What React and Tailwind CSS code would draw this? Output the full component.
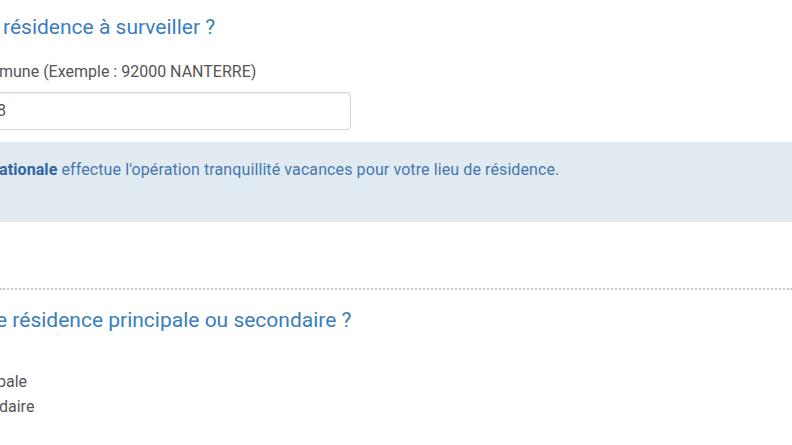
export default function App() {
    return (
        <div className="w-[792px] h-[445px] overflow-hidden bg-white font-['Roboto',sans-serif]">
            {/* Résidence à surveiller */}
            <h2 className="flex pt-[14px] text-[21px] leading-[26px] text-[#3b7dbd] whitespace-nowrap">
                <span className="-ml-[300px] w-[294px] shrink-0 text-right">Quelle est l'adresse de la</span>
                <span className="ml-[9px]">résidence à surveiller ?</span>
            </h2>

            <label className="flex mt-[21px] text-[16px] leading-[22px] text-[#555] whitespace-nowrap">
                <span className="-ml-[300px] w-[299px] shrink-0 text-right">Code postal et com</span>
                <span>mune (Exemple : 92000 NANTERRE)</span>
            </label>

            <div className="flex items-center mt-[9px] -ml-[200px] w-[551px] h-[38px] border border-[#d4d4d4] rounded-[4px] shadow-[inset_0_1px_1px_rgba(0,0,0,0.06)] text-[16px] text-[#555] whitespace-nowrap">
                <span className="w-[196px] shrink-0 text-right">9207</span>
                <span>8</span>
            </div>

            <div className="mt-[12px] h-[80px] bg-[#e1eaf1] pt-[17px]">
                <p className="flex text-[16px] leading-[22px] text-[#4577ad] whitespace-nowrap tracking-[0.1px]">
                    <span className="-ml-[300px] w-[299px] shrink-0 text-right font-bold text-[#2f65a0]">La Police n</span>
                    <span className="font-bold text-[#2f65a0]">ationale</span>
                    <span className="ml-[4px]">effectue l'opération tranquillité vacances pour votre lieu de résidence.</span>
                </p>
            </div>

            <div className="mt-[66px] border-t-2 border-dotted border-[#c8c8c8]"></div>

            {/* Type de résidence */}
            <h2 className="flex mt-[17px] text-[21px] leading-[26px] text-[#3b7dbd] whitespace-nowrap">
                <span className="-ml-[300px] w-[296px] shrink-0 text-right">S'agit-il d'un</span>
                <span>e résidence principale ou secondaire ?</span>
            </h2>

            <div className="mt-[38px] text-[16px] leading-[22px] text-[#555] whitespace-nowrap">
                <label className="flex h-[25px]">
                    <span className="-ml-[300px] w-[297px] shrink-0 text-right">Résidence princi</span>
                    <span>pale</span>
                </label>
                <label className="flex h-[25px]">
                    <span className="-ml-[300px] w-[299px] shrink-0 text-right">Résidence secon</span>
                    <span>daire</span>
                </label>
            </div>
        </div>
    )
}
